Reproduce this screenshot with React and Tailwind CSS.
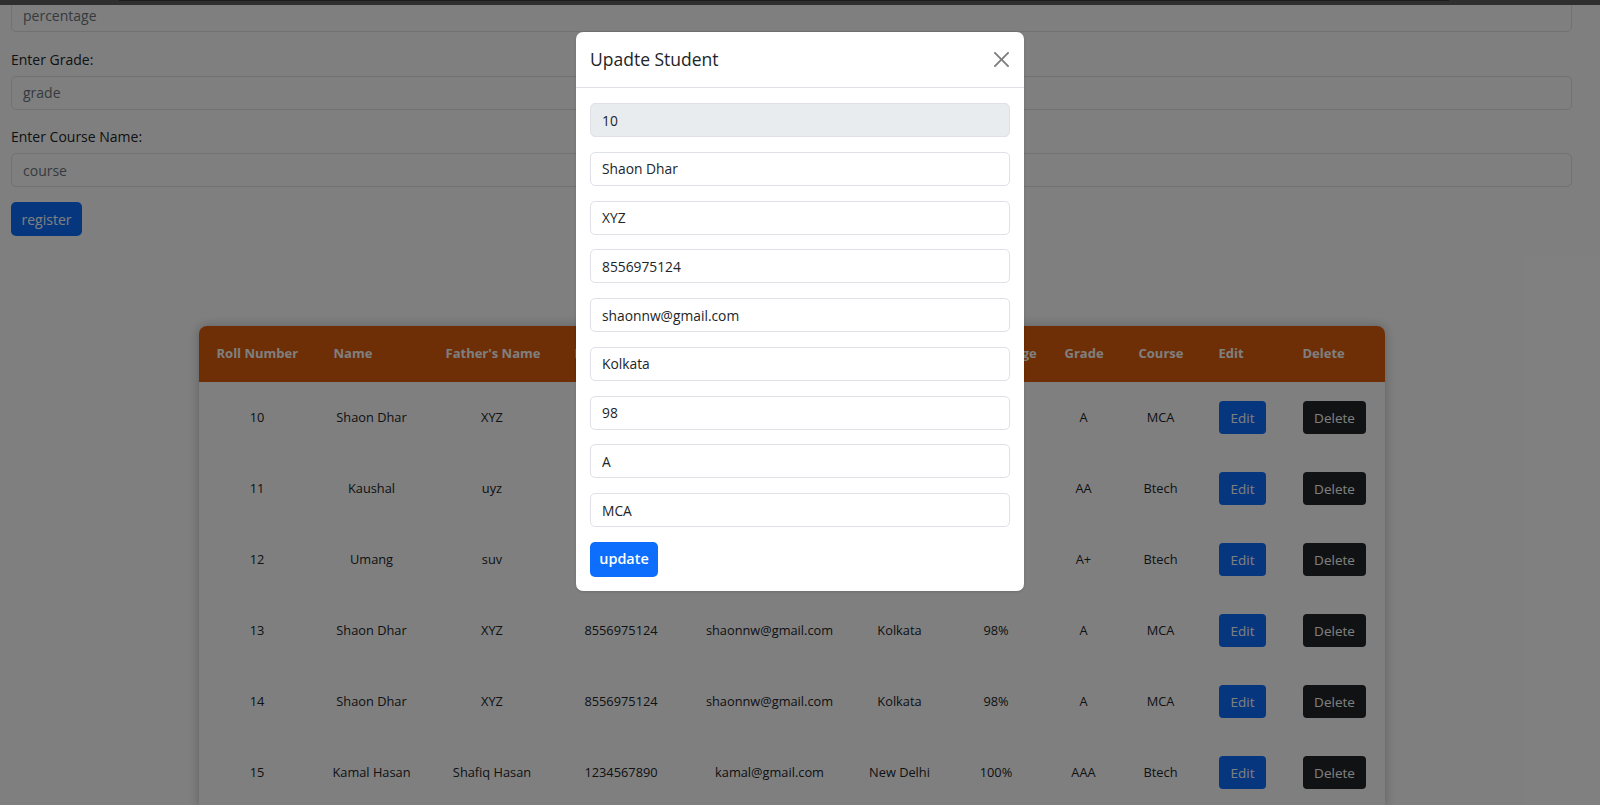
import React from "react";

const students = [
  { roll: 10, name: "Shaon Dhar", father: "XYZ", phone: "8556975124", email: "shaonnw@gmail.com", address: "Kolkata", pct: "98%", grade: "A", course: "MCA" },
  { roll: 11, name: "Kaushal", father: "uyz", phone: "9876543210", email: "kaushal@gmail.com", address: "Mumbai", pct: "90%", grade: "AA", course: "Btech" },
  { roll: 12, name: "Umang", father: "suv", phone: "9123456780", email: "umang@gmail.com", address: "Pune", pct: "95%", grade: "A+", course: "Btech" },
  { roll: 13, name: "Shaon Dhar", father: "XYZ", phone: "8556975124", email: "shaonnw@gmail.com", address: "Kolkata", pct: "98%", grade: "A", course: "MCA" },
  { roll: 14, name: "Shaon Dhar", father: "XYZ", phone: "8556975124", email: "shaonnw@gmail.com", address: "Kolkata", pct: "98%", grade: "A", course: "MCA" },
  { roll: 15, name: "Kamal Hasan", father: "Shafiq Hasan", phone: "1234567890", email: "kamal@gmail.com", address: "New Delhi", pct: "100%", grade: "AAA", course: "Btech" },
];

const headers = [
  ["Roll Number", "w-[117px]"],
  ["Name", "w-[112px]"],
  ["Father's Name", "w-[129px]"],
  ["Phone Number", "w-[129px]"],
  ["Email", "w-[168px]"],
  ["Address", "w-[92px]"],
  ["Percentage", "w-[101px]"],
  ["Grade", "w-[74px]"],
  ["Course", "w-[80px]"],
  ["Edit", "w-[84px]"],
  ["Delete", "w-[100px]"],
];

const modalValues = ["Shaon Dhar", "XYZ", "8556975124", "shaonnw@gmail.com", "Kolkata", "98", "A", "MCA"];

export default function App() {
  return (
    <div className="relative h-[805px] overflow-hidden bg-white pr-[17px] text-[#212529] font-['Segoe_UI','Open_Sans',sans-serif]">
      {/* Register form (scrolled) */}
      <div className="-mt-[2px] px-[11px] text-[14px]">
        <input readOnly placeholder="percentage" className="block h-[34px] w-full rounded-[5px] border border-[#dee2e6] px-[11px] placeholder:text-[#6c757d] outline-none" />
        <label className="mt-[17px] mb-[5px] block leading-[21.6px]">Enter Grade:</label>
        <input readOnly placeholder="grade" className="block h-[34px] w-full rounded-[5px] border border-[#dee2e6] px-[11px] placeholder:text-[#6c757d] outline-none" />
        <label className="mt-[16px] mb-[6px] block leading-[21.6px]">Enter Course Name:</label>
        <input readOnly placeholder="course" className="block h-[34px] w-full rounded-[5px] border border-[#dee2e6] px-[11px] placeholder:text-[#6c757d] outline-none" />
        <button className="mt-[15px] h-[34px] w-[71px] rounded-[5px] bg-[#0d6efd] text-white">register</button>
      </div>

      {/* Students table */}
      <table className="mx-auto mt-[90px] w-[1186px] table-fixed border-separate border-spacing-0 rounded-t-lg bg-white shadow-[0_0_12px_rgba(0,0,0,0.25)] text-[12.8px]">
        <thead>
          <tr>
            {headers.map(([h, w], i) => (
              <th
                key={h}
                className={`${w} h-[56px] bg-[#dc5c0c] px-[18px] text-left text-[13px] font-bold text-white whitespace-nowrap ${i === 0 ? "rounded-tl-lg" : ""} ${i === headers.length - 1 ? "rounded-tr-lg" : ""}`}
              >
                {h}
              </th>
            ))}
          </tr>
        </thead>
        <tbody>
          {students.map((s) => (
            <tr key={s.roll} className="h-[71px] text-center">
              <td>{s.roll}</td>
              <td>{s.name}</td>
              <td>{s.father}</td>
              <td>{s.phone}</td>
              <td>{s.email}</td>
              <td>{s.address}</td>
              <td>{s.pct}</td>
              <td>{s.grade}</td>
              <td>{s.course}</td>
              <td>
                <button className="h-[33px] w-[47px] rounded-[4px] bg-[#0d6efd] text-[13.5px] text-white">Edit</button>
              </td>
              <td>
                <button className="h-[33px] w-[63px] rounded-[4px] bg-[#212529] text-[13.5px] text-white">Delete</button>
              </td>
            </tr>
          ))}
        </tbody>
      </table>

      {/* dark strip at the very top */}
      <div className="absolute left-0 right-0 top-0 h-[5px] bg-[#5e5e5e]">
        <div className="ml-[119px] h-[1px] w-[1330px] bg-[#3a3a3a]" />
      </div>

      {/* Backdrop */}
      <div className="absolute inset-0 bg-black/50" />

      {/* Modal */}
      <div className="absolute inset-0 flex justify-center pt-[32px]">
        <div className="h-[559px] w-[448px] rounded-[7px] bg-white shadow-sm">
          <div className="flex h-[56px] items-center justify-between border-b border-[#dee2e6] px-[14px]">
            <h5 className="text-[17.5px] font-medium leading-none">Upadte Student</h5>
            <svg width="15" height="15" viewBox="0 0 16 16" className="mr-[1px] opacity-50">
              <path
                fill="#000"
                d="M.293.293a1 1 0 0 1 1.414 0L8 6.586 14.293.293a1 1 0 1 1 1.414 1.414L9.414 8l6.293 6.293a1 1 0 0 1-1.414 1.414L8 9.414l-6.293 6.293a1 1 0 0 1-1.414-1.414L6.586 8 .293 1.707a1 1 0 0 1 0-1.414z"
              />
            </svg>
          </div>
          <div className="flex flex-col gap-[14.75px] px-[14px] pt-[15px] text-[13.8px]">
            <input readOnly value="10" className="block h-[34px] w-full rounded-[5px] border border-[#dee2e6] bg-[#e9ecef] px-[11px] outline-none" />
            {modalValues.map((v, i) => (
              <input key={i} readOnly value={v} className="block h-[34px] w-full rounded-[5px] border border-[#dee2e6] bg-white px-[11px] outline-none" />
            ))}
            <div>
              <button className="h-[35px] w-[68px] rounded-[5px] bg-[#0d6efd] text-[14.4px] font-semibold text-white">update</button>
            </div>
          </div>
        </div>
      </div>
    </div>
  );
}
